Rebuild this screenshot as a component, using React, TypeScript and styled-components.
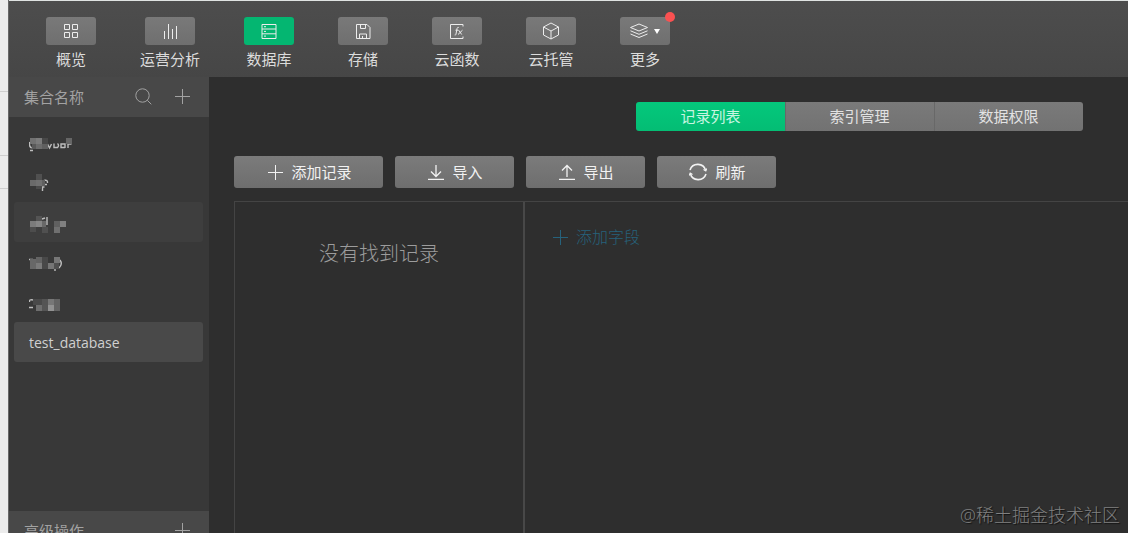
import React from "react";
import styled, { createGlobalStyle } from "styled-components";

const GlobalStyle = createGlobalStyle`
  * { box-sizing: border-box; }
  body {
    margin: 0;
    background: #2e2e2e;
    font-family: "Open Sans", "Noto Sans CJK SC", sans-serif;
    font-size: 15px;
    color: #dcdcdc;
  }
  button {
    margin: 0;
    padding: 0;
    border: 0;
    background: none;
    color: inherit;
    font: inherit;
    cursor: pointer;
  }
  svg { display: block; flex: none; }
`;

const Window = styled.div`
  display: flex;
  height: 100vh;
  overflow: hidden;
`;

const Backdrop = styled.div`
  flex: none;
  width: 9px;
  border-right: 1px solid #686868;
  background: #ececec;
`;

const BackdropRow = styled.div<{ $height: number }>`
  height: ${(p) => p.$height}px;
  border-bottom: 1px solid #cfcfcf;
`;

const Shell = styled.div`
  flex: 1;
  min-width: 0;
  display: flex;
  flex-direction: column;
  border-top: 1px solid #dfe3e2;
`;

const TopBar = styled.nav`
  flex: none;
  display: flex;
  gap: 44px;
  height: 76px;
  padding: 16px 37px 0;
  background: linear-gradient(#4d4d4d, #464646);
`;

const NavButton = styled.button`
  display: flex;
  flex-direction: column;
  align-items: center;
  justify-content: flex-start;
  gap: 4px;
  min-width: 50px;
  height: 54px;
  line-height: 20px;
`;

const NavIcon = styled.span<{ $active?: boolean }>`
  position: relative;
  display: flex;
  align-items: center;
  justify-content: center;
  gap: 6px;
  width: 50px;
  height: 28px;
  border-radius: 3px;
  color: #ededed;
  background: ${(p) => (p.$active ? "#04b671" : "linear-gradient(#797979, #6f6f6f)")};
`;

const Badge = styled.span`
  position: absolute;
  top: -5px;
  right: -5px;
  width: 10px;
  height: 10px;
  border-radius: 50%;
  background: #fa5151;
`;

const Body = styled.div`
  flex: 1;
  min-height: 0;
  display: flex;
`;

const Sidebar = styled.aside`
  flex: none;
  display: flex;
  flex-direction: column;
  width: 200px;
  background: #383838;
  overflow: hidden;
`;

const SectionHeader = styled.div`
  flex: none;
  display: flex;
  align-items: center;
  gap: 22px;
  height: 40px;
  padding: 0 19px 2px 15px;
  background: #484848;
  color: #a2a2a2;
`;

const SectionTitle = styled.h2`
  flex: 1;
  margin: 0;
  font-size: 15px;
  font-weight: 400;
`;

const CollectionList = styled.ul`
  flex: 1 0 394px;
  margin: 0;
  padding: 5px 6px 0 5px;
  list-style: none;
`;

const CollectionButton = styled.button<{ $tone?: "hover" | "selected" }>`
  display: flex;
  align-items: center;
  width: 100%;
  height: 40px;
  padding: 0 15px;
  border-radius: 3px;
  color: #d0d0d0;
  font-size: 14px;
  background: ${(p) =>
    p.$tone === "selected" ? "#494949" : p.$tone === "hover" ? "#3e3e3e" : "transparent"};
`;

const Main = styled.main`
  flex: 1;
  min-width: 0;
  display: flex;
  flex-direction: column;
  padding: 25px 0 0 25px;
  background: #2e2e2e;
`;

const Tabs = styled.div`
  flex: none;
  align-self: flex-end;
  display: flex;
  margin-right: 45px;
  border-radius: 3px;
  overflow: hidden;
`;

const Tab = styled.button<{ $active?: boolean }>`
  width: 149px;
  height: 29px;
  line-height: 29px;
  color: ${(p) => (p.$active ? "#c8f5e1" : "#e2e2e2")};
  background: ${(p) =>
    p.$active ? "linear-gradient(#04c87c, #04bd74)" : "linear-gradient(#7a7a7a, #727272)"};
  & + & {
    box-shadow: inset 1px 0 #686868;
  }
`;

const Actions = styled.div`
  flex: none;
  display: flex;
  gap: 12px;
  margin-top: 25px;
`;

const ActionButton = styled.button<{ $wide?: boolean }>`
  display: flex;
  align-items: center;
  justify-content: center;
  gap: 8px;
  width: ${(p) => (p.$wide ? 149 : 119)}px;
  height: 32px;
  padding: 0 0 1px 2px;
  border-radius: 3px;
  color: #f2f2f2;
  background: linear-gradient(#7b7b7b, #6e6e6e);
`;

const Panels = styled.div`
  flex: 1;
  display: flex;
  margin-top: 13px;
  border-top: 1px solid #444;
  border-left: 1px solid #444;
`;

const RecordPanel = styled.section`
  flex: none;
  width: 290px;
  padding-top: 37px;
  border-right: 2px solid #484848;
  color: #9c9c9c;
  font-size: 20px;
  font-weight: 300;
  line-height: 30px;
  text-align: center;
`;

const FieldPanel = styled.section`
  flex: 1;
  min-width: 0;
  padding: 23px 27px;
`;

const AddField = styled.button`
  display: flex;
  align-items: center;
  gap: 8px;
  color: #26627c;
  font-size: 16px;
  font-weight: 300;
  line-height: 24px;
`;

const Watermark = styled.div`
  position: absolute;
  right: 8px;
  bottom: 6px;
  color: #808080;
  font-size: 18px;
  font-weight: 300;
  line-height: 24px;
  text-shadow: 1px 1px 1px #111;
`;

const Icon = ({ size = 16, children }: { size?: number; children: React.ReactNode }) => (
  <svg width={size} height={size} viewBox={`0 0 ${size} ${size}`} fill="none" stroke="currentColor" aria-hidden="true">
    {children}
  </svg>
);

const PlusIcon = () => (
  <Icon>
    <path d="M8.5 1v15M1 8.5h15" />
  </Icon>
);

const navItems: { label: string; icon: React.ReactNode; active?: boolean; badge?: boolean }[] = [
  {
    label: "概览",
    icon: (
      <Icon>
        <path d="M1.5 1.5h5v5h-5zM9.5 1.5h5v5h-5zM1.5 9.5h5v5h-5zM9.5 9.5h5v5h-5z" />
      </Icon>
    ),
  },
  {
    label: "运营分析",
    icon: (
      <Icon>
        <path d="M2.5 8v8M6.5 1v15M10.5 6v10M14.5 3v13" />
      </Icon>
    ),
  },
  {
    label: "数据库",
    active: true,
    icon: (
      <Icon>
        <path d="M1 1.5h14v14H1zM1 6h14M1 10.8h14M3 3.7h2M3 8.4h2M3 13.1h2" />
      </Icon>
    ),
  },
  {
    label: "存储",
    icon: (
      <Icon>
        <path d="M1.5 1.5h10.500l3 3v11h-13.500zM5.5 1.5v4h5v-4M4.500 15.500v-4.500h7v4.500M7.500 13v2.500" />
      </Icon>
    ),
  },
  {
    label: "云函数",
    icon: (
      <Icon>
        <path d="M14 3.5v-2H1.5v14H14v-2" />
        <path d="M9.8 4.5c-1-.4-1.600.2-1.800 1.200L7 11c-.2 1-.6 1.300-1.300 1M6.500 7.200h2.800M9.700 7.200l3 4.300M13.500 7.200l-4.500 4.300" />
      </Icon>
    ),
  },
  {
    label: "云托管",
    icon: (
      <Icon size={18}>
        <path d="M9 1l7.500 4v8L9 17l-7.500-4V5zM1.500 5L9 9l7.500-4M9 9v8" />
      </Icon>
    ),
  },
  {
    label: "更多",
    badge: true,
    icon: (
      <>
        <Icon size={18}>
          <path d="M9 2l8.500 3.500L9 9 .5 5.500zM.5 8.800L9 12.300l8.500-3.500M.5 12L9 15.500l8.500-3.500" />
        </Icon>
        <svg width="6" height="5" viewBox="0 0 6 5" fill="#fff" aria-hidden="true">
          <path d="M0 0h6L3 5z" />
        </svg>
      </>
    ),
  },
];

/* Each cell is [x, y, width, height, grey level]. */
type Cell = [number, number, number, number, string];

const Mosaic = ({ cells, strokes }: { cells: Cell[]; strokes: string }) => (
  <svg width="48" height="24" viewBox="0 -1 48 24" aria-hidden="true">
    <path d={strokes} fill="none" stroke="#bdbdbd" strokeWidth="1.4" />
    {cells.map(([x, y, w, h, fill]) => (
      <rect key={`${x}-${y}`} x={x} y={y} width={w} height={h} fill={fill} />
    ))}
  </svg>
);

const maskedCollections: { id: string; hover?: boolean; cells: Cell[]; strokes: string }[] = [
  {
    id: "集合 1",
    strokes: "M.7 11q-1 5 2 6M1 19.500h3M18.500 13l2 4 2-4M25 12.500v4h3.500q2-2 0-4M36 16.500h-4v-3.500h4v4M39 17v-4h3.500",
    cells: [[1, 7, 6, 6, "#727272"], [7, 7, 6, 6, "#7c7c7c"], [13, 7, 6, 6, "#484848"], [3, 13, 4, 5, "#5a5a5a"], [7, 13, 6, 5, "#6d6d6d"], [13, 13, 6, 5, "#606060"], [37, 7, 6, 6, "#666"]],
  },
  {
    id: "集合 2",
    strokes: "M15 9.500q4-1 3.500 2.500M15 13.500h3M12.500 16h3M13.500 16v4",
    cells: [[7, 3, 6, 6, "#505050"], [1, 9, 6, 6, "#6a6a6a"], [7, 9, 6, 6, "#707070"], [13, 9, 3, 6, "#606060"], [7, 15, 6, 3, "#4b4b4b"]],
  },
  {
    id: "集合 3",
    hover: true,
    strokes: "M13 8l3-1M18 6v8",
    cells: [[7, 5, 6, 5, "#545454"], [1, 10, 6, 6, "#7b7b7b"], [7, 10, 6, 6, "#868686"], [13, 10, 4, 6, "#686868"], [1, 16, 6, 5, "#4d4d4d"], [13, 16, 6, 6, "#505050"], [25, 10, 6, 6, "#606060"], [31, 10, 6, 6, "#808080"], [25, 16, 6, 6, "#707070"]],
  },
  {
    id: "集合 4",
    strokes: "M0 8.500h4M31 9q3 4-1 8M26 18v2",
    cells: [[1, 8, 6, 10, "#686868"], [7, 6, 6, 6, "#646464"], [7, 12, 6, 6, "#7b7b7b"], [13, 6, 6, 12, "#484848"], [19, 12, 6, 6, "#767676"], [25, 6, 6, 6, "#777"], [25, 12, 5, 6, "#505050"]],
  },
  {
    id: "集合 5",
    strokes: "M4 9q-4-1-3.500 2M0 16.500h4",
    cells: [[4, 8, 9, 6, "#494949"], [13, 8, 6, 6, "#545454"], [7, 14, 6, 6, "#6e6e6e"], [13, 14, 6, 6, "#555"], [19, 8, 6, 6, "#777"], [19, 14, 6, 6, "#929292"], [25, 8, 6, 12, "#646464"]],
  },
];

export default function App() {
  return (
    <>
      <GlobalStyle />
      <Window>
        <Backdrop>
          <BackdropRow $height={92} />
          <BackdropRow $height={64} />
          <BackdropRow $height={33} />
        </Backdrop>
        <Shell>
          <TopBar>
            {navItems.map((item) => (
              <NavButton key={item.label} type="button">
                <NavIcon $active={item.active}>
                  {item.icon}
                  {item.badge && <Badge />}
                </NavIcon>
                {item.label}
              </NavButton>
            ))}
          </TopBar>
          <Body>
            <Sidebar>
              <SectionHeader>
                <SectionTitle>集合名称</SectionTitle>
                <button type="button" aria-label="搜索">
                  <Icon size={18}>
                    <circle cx="8.5" cy="8.5" r="6.700" />
                    <path d="M13.3 13.3l4 4" />
                  </Icon>
                </button>
                <button type="button" aria-label="添加集合">
                  <PlusIcon />
                </button>
              </SectionHeader>
              <CollectionList>
                {maskedCollections.map((c) => (
                  <li key={c.id}>
                    <CollectionButton type="button" aria-label={c.id} $tone={c.hover ? "hover" : undefined}>
                      <Mosaic cells={c.cells} strokes={c.strokes} />
                    </CollectionButton>
                  </li>
                ))}
                <li>
                  <CollectionButton type="button" $tone="selected">
                    test_database
                  </CollectionButton>
                </li>
              </CollectionList>
              <SectionHeader>
                <SectionTitle>高级操作</SectionTitle>
                <button type="button" aria-label="添加高级操作">
                  <PlusIcon />
                </button>
              </SectionHeader>
            </Sidebar>
            <Main>
              <Tabs>
                <Tab type="button" $active>记录列表</Tab>
                <Tab type="button">索引管理</Tab>
                <Tab type="button">数据权限</Tab>
              </Tabs>
              <Actions>
                <ActionButton type="button" $wide>
                  <PlusIcon />
                  添加记录
                </ActionButton>
                <ActionButton type="button">
                  <Icon>
                    <path d="M8 1v11M3 7.500l5 5 5-5M0 15.500h16" strokeWidth="1.3" />
                  </Icon>
                  导入
                </ActionButton>
                <ActionButton type="button">
                  <Icon>
                    <path d="M8 13V1.500M3 6.500l5-5 5 5M0 15.500h16" strokeWidth="1.3" />
                  </Icon>
                  导出
                </ActionButton>
                <ActionButton type="button">
                  <Icon size={18}>
                    <g strokeWidth="1.6">
                      <path d="M1 7a8.200 8.200 0 0 1 15.700.5M17 11a8.200 8.200 0 0 1-15.700-.5" />
                      <path d="M14.500 6.500l2.300 1.500 1-2.500M3.500 11.500L1.200 10l-1 2.500" strokeWidth="1.1" />
                    </g>
                  </Icon>
                  刷新
                </ActionButton>
              </Actions>
              <Panels>
                <RecordPanel>没有找到记录</RecordPanel>
                <FieldPanel>
                  <AddField type="button">
                    <PlusIcon />
                    添加字段
                  </AddField>
                </FieldPanel>
              </Panels>
            </Main>
          </Body>
        </Shell>
      </Window>
      <Watermark>@稀土掘金技术社区</Watermark>
    </>
  );
}
